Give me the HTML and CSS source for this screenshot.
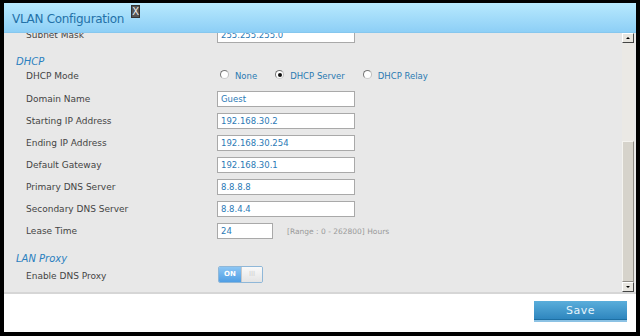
FILE: index.html
```html
<!DOCTYPE html>
<html lang="en">
<head>
  <meta charset="UTF-8" />
  <title>VLAN Configuration</title>
  <link rel="stylesheet" href="styles.css">
</head>
<body>
  <div class="dialog">
    <div class="header">
      <span class="title">VLAN Configuration</span>
      <span class="close">X</span>
    </div>
    <div class="content">
      <div class="form">
        <div class="row">
          <label>Subnet Mask</label>
          <input type="text" value="255.255.255.0" />
        </div>

        <div class="section">DHCP</div>
        <div class="row mode">
          <label>DHCP Mode</label>
          <div class="radios">
            <span class="radio"><i></i>None</span>
            <span class="radio checked"><i></i>DHCP Server</span>
            <span class="radio"><i></i>DHCP Relay</span>
          </div>
        </div>
        <div class="row">
          <label>Domain Name</label>
          <input type="text" value="Guest" />
        </div>
        <div class="row">
          <label>Starting IP Address</label>
          <input type="text" value="192.168.30.2" />
        </div>
        <div class="row">
          <label>Ending IP Address</label>
          <input type="text" value="192.168.30.254" />
        </div>
        <div class="row">
          <label>Default Gateway</label>
          <input type="text" value="192.168.30.1" />
        </div>
        <div class="row">
          <label>Primary DNS Server</label>
          <input type="text" value="8.8.8.8" />
        </div>
        <div class="row">
          <label>Secondary DNS Server</label>
          <input type="text" value="8.8.4.4" />
        </div>
        <div class="row">
          <label>Lease Time</label>
          <input type="text" class="short" value="24" />
          <span class="hint">[Range : 0 - 262800] Hours</span>
        </div>

        <div class="section lan">LAN Proxy</div>
        <div class="row toggle-row">
          <label>Enable DNS Proxy</label>
          <div class="toggle">
            <span class="on">ON</span>
            <span class="off">III</span>
          </div>
        </div>
      </div>
      <div class="scrollbar">
        <div class="arrow up"></div>
        <div class="track">
          <div class="thumb"></div>
        </div>
        <div class="arrow down"></div>
      </div>
    </div>
    <div class="footer">
      <button class="save">Save</button>
    </div>
  </div>
</body>
</html>
```

FILE: styles.css
```css
* {
  box-sizing: border-box;
}
html, body {
  height: 100%;
}
body {
  margin: 0;
  background: #000;
  font-family: 'DejaVu Sans', sans-serif;
  font-size: 9px;
  overflow: hidden;
}
.dialog {
  margin: 3px 4px 0 4px;
  height: 329px;
  background: #fff;
  display: flex;
  flex-direction: column;
}
.header {
  height: 30px;
  flex: none;
  background: linear-gradient(to bottom, #b8e9fe, #8dcff6);
  border-bottom: 1px solid #86c7ee;
  display: flex;
  align-items: flex-start;
  padding-left: 8px;
  position: relative;
  z-index: 2;
}
.title {
  font-size: 12px;
  letter-spacing: -0.3px;
  color: #2371a8;
  margin-top: 9px;
}
.close {
  margin-left: 7px;
  margin-top: 2px;
  width: 9px;
  height: 13px;
  background: #555;
  border: 1px solid #333;
  color: #eee;
  font-size: 10px;
  line-height: 11px;
  text-align: center;
}
.content {
  flex: 1;
  display: flex;
  background: #e8e8e8;
  overflow: hidden;
  border-bottom: 2px solid #d6d6d6;
}
.form {
  flex: 1;
  margin-top: -9px;
}
.row {
  height: 22px;
  display: flex;
  align-items: center;
  padding-left: 22px;
  color: #444;
}
.row label {
  width: 191px;
  flex: none;
}
.row input {
  width: 138px;
  height: 16px;
  border: 1px solid #a9a9a9;
  background: #fff;
  font-family: 'DejaVu Sans', sans-serif;
  font-size: 8.5px;
  color: #2b79b5;
  padding: 0 3px;
  margin: 0;
  outline: none;
}
.row input.short {
  width: 56px;
}
.hint {
  color: #9a9a9a;
  margin-left: 14px;
  font-size: 7.5px;
}
.section {
  padding-top: 9px;
  height: 22px;
  line-height: 14px;
  padding-left: 12px;
  font-size: 10px;
  font-style: italic;
  color: #2a7fbf;
}
.section.lan {
  padding-top: 10px;
  height: 24px;
}
.row.mode {
  height: 20px;
  padding-bottom: 4px;
}
.radios {
  display: flex;
  color: #2a7ab2;
  font-size: 8.5px;
  margin-left: 3px;
}
.radio {
  display: flex;
  align-items: center;
  margin-right: 18px;
}
.radio i {
  width: 9px;
  height: 9px;
  border-radius: 50%;
  background: #fff;
  border: 1px solid #777;
  border-bottom-color: #ccc;
  border-right-color: #bbb;
  margin-right: 6px;
  margin-top: -3px;
  position: relative;
}
.radio.checked i::after {
  content: "";
  position: absolute;
  left: 1.5px;
  top: 1.5px;
  width: 4px;
  height: 4px;
  border-radius: 50%;
  background: #111;
}
.toggle-row {
  height: 18px;
  padding-top: 2px;
}
.toggle {
  display: flex;
  width: 45px;
  height: 17px;
  border: 1px solid #8fb7d8;
  border-radius: 2px;
  overflow: hidden;
  font-size: 7px;
  margin-left: 1px;
  margin-top: -3px;
}
.toggle .on {
  width: 22px;
  background: linear-gradient(to bottom, #8cc6f4, #4f9ee4);
  color: #fff;
  text-align: center;
  line-height: 15px;
  font-weight: bold;
}
.toggle .off {
  flex: 1;
  background: linear-gradient(to bottom, #fafafa, #e4e4e4);
  border-left: 1px solid #c8c8c8;
  color: #d0d0d0;
  text-align: center;
  line-height: 15px;
}
.scrollbar {
  width: 12px;
  flex: none;
  display: flex;
  flex-direction: column;
  margin-right: 2px;
  background: #e6e4df;
}
.arrow {
  height: 10px;
  background: #e8e6e0;
  border: 1px solid;
  border-color: #fff #444 #444 #fff;
  position: relative;
}
.arrow::after {
  content: "";
  position: absolute;
  left: 3px;
  top: 3px;
  border-left: 2px solid transparent;
  border-right: 2px solid transparent;
}
.arrow.up::after {
  border-bottom: 2px solid #000;
}
.arrow.down::after {
  border-top: 2px solid #000;
}
.track {
  flex: 1;
  display: flex;
  flex-direction: column;
  justify-content: flex-end;
  background: #ebe9e5;
}
.thumb {
  height: 141px;
  background: #d6d3cb;
  border: 1px solid;
  border-color: #f4f3ef #8f8c86 #8f8c86 #f4f3ef;
}
.footer {
  height: 38px;
  flex: none;
  display: flex;
  justify-content: flex-end;
  align-items: flex-start;
  padding-top: 7px;
  padding-right: 9px;
}
.save {
  width: 93px;
  height: 21px;
  border: none;
  border-bottom: 2px solid #8cc2e4;
  background: linear-gradient(to bottom, #5aaedb, #2c84bd);
  box-shadow: inset 0 -1px 0 #1d6fa3;
  color: #e6f4fb;
  font-family: 'DejaVu Sans', sans-serif;
  font-size: 11px;
  letter-spacing: 0.5px;
  padding: 0;
}
```
